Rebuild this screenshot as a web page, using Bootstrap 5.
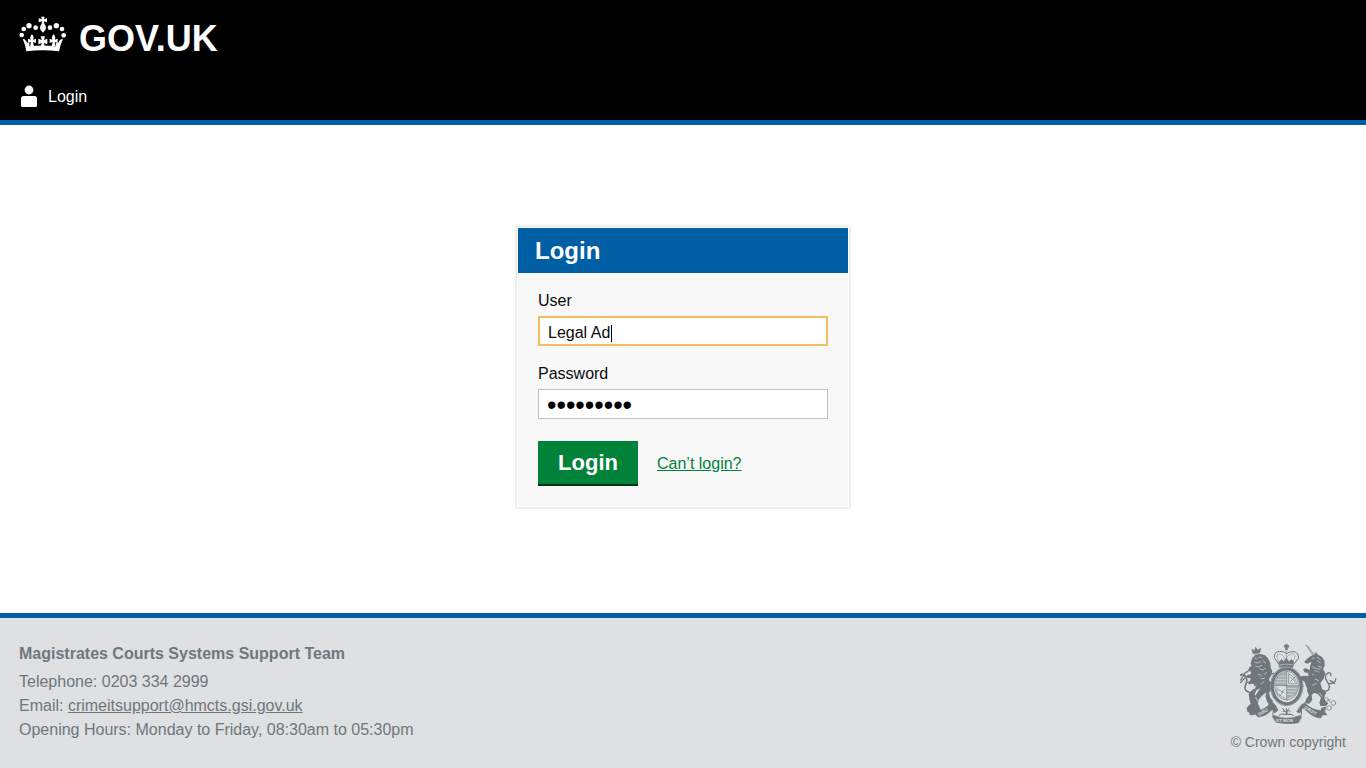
<!DOCTYPE html>
<html lang="en">
<head>
<meta charset="utf-8">
<meta name="viewport" content="width=device-width, initial-scale=1">
<title>Login - GOV.UK</title>
<link href="https://cdn.jsdelivr.net/npm/bootstrap@5.3.0/dist/css/bootstrap.min.css" rel="stylesheet">
<style>
  body { font-family: "Liberation Sans", Arial, sans-serif; font-size: 16px; line-height: 24px; color: #0b0c0c; }
  .site-header { background: #000; border-bottom: 5px solid #005ea5; padding: 16px 20px 11px 19px; }
  .brand-name { font-size: 36px; line-height: 46px; }
  .site-header a { color: #fff; }
  .site-nav { padding-top: 23px; }
  .panel { width: 332px; background: #f8f8f8; border: 1px solid #fff; box-shadow: 0 0 3px 1px #dcdfdf; }
  .panel-title { background: #005ea5; color: #fff; font-size: 24px; line-height: 45px; padding: 0 17px; }
  .panel-content { padding: 16px 20px 20px; }
  .form-label { margin-bottom: 3px; display: block; }
  .form-control { height: 30px; padding: 3px 8px 0 9px; border: 1px solid #bfc1c3; border-radius: 0; font-size: 16px; line-height: 24px; color: #0b0c0c; }
  .form-control[type=password] { font-size: 27px; padding-left: 8px; color: #000; }
  .field-active, .field-active:focus { border: 2px solid #f5be5c; padding: 3px 8px 0; box-shadow: none; caret-color: transparent; color: #0b0c0c; }
  .text-caret { position: absolute; left: 73px; top: 9px; width: 1px; height: 17px; background: #000; }
  .panel-actions { gap: 19px; padding-top: 22px; }
  .btn-go { width: 100px; height: 45px; padding: 0; border: 0; border-bottom: 2px solid #003618; border-radius: 0; background: #00823b; color: #fff; font-size: 22px; line-height: 43px; font-weight: 700; }
  .btn-go:hover { background: #00692f; color: #fff; }
  .help-link { color: #00823b; }
  .site-footer { background: #dee0e2; border-top: 5px solid #005ea5; color: #6f777b; padding: 24px 20px 16px 19px; }
  .site-footer a { color: #6f777b; }
  .copyright { font-size: 14px; line-height: 20px; }
</style>
</head>
<body class="min-vh-100 d-flex flex-column">

<header class="site-header">
  <a href="#" class="d-inline-flex align-items-start align-top text-decoration-none" aria-label="GOV.UK">
    <svg width="48" height="36" viewBox="27 18 144 108" fill="#fff" aria-hidden="true">
      <path d="M93 20h11l-2 8 9-3v12l-9-3 1 7q5 6 5 13t-9 14q-9-7-9-14t5-13l1-7-10 3V25l10 3z"/>
      <circle cx="77" cy="53" r="7"/><circle cx="57" cy="47" r="8"/><circle cx="41" cy="57" r="7"/><circle cx="35" cy="75" r="7"/>
      <circle cx="120" cy="53" r="7"/><circle cx="139" cy="47" r="8"/><circle cx="156" cy="57" r="7"/><circle cx="161" cy="76" r="7"/>
      <path d="M38 86q8 1 10 6 2 9 10 7v10q40-5 80 0V99q8 2 10-7 3-5 11-6-8 18-12 38-49-7-98 0-3-20-11-38z"/>
      <path d="M92 79h13l-3 11 10-4v17l-10-4 2 9H93l2-9-10 4V86l10 4z"/>
      <path d="M66 73q8 8 3 16l9-3v13l-9-3 3 12H60l3-12-9 3V86l8 3q-4-8 4-16zM131 73q8 8 3 16l9-3v13l-9-3 3 12h-12l3-12-9 3V86l8 3q-4-8 4-16z"/>
    </svg>
    <span class="brand-name fw-bold ms-2 ps-1">GOV.UK</span>
  </a>
  <nav class="site-nav d-flex">
    <a href="#" class="d-flex align-items-center text-decoration-none">
      <svg class="me-2" width="21" height="24" viewBox="0 0 21 24" fill="#fff" aria-hidden="true"><circle cx="10" cy="5" r="4.400"/><path d="M4.500 11h11Q18 11 18 13.500V20.500Q18 22 16.500 22H3.500Q2 22 2 20.500V13.500Q2 11 4.500 11z"/></svg>
      <span>Login</span>
    </a>
  </nav>
</header>

<main class="flex-grow-1 d-flex align-items-center justify-content-center pb-1">
  <form class="panel" onsubmit="return false">
    <h1 class="panel-title fw-bold m-0">Login</h1>
    <div class="panel-content">
      <div class="mb-3">
        <label class="form-label" for="user">User</label>
        <div class="position-relative">
          <input class="form-control field-active" id="user" type="text" value="Legal Ad">
          <span class="text-caret" aria-hidden="true"></span>
        </div>
      </div>
      <div>
        <label class="form-label" for="password">Password</label>
        <input class="form-control" id="password" type="password" value="magistrat">
      </div>
      <div class="panel-actions d-flex align-items-center">
        <button class="btn btn-go" type="submit">Login</button>
        <a class="help-link" href="#">Can’t login?</a>
      </div>
    </div>
  </form>
</main>

<footer class="site-footer d-flex justify-content-between align-items-start">
  <div>
    <h2 class="fs-6 fw-bold mb-1 lh-base">Magistrates Courts Systems Support Team</h2>
    <div>Telephone: 0203 334 2999</div>
    <div>Email: <a href="mailto:crimeitsupport@hmcts.gsi.gov.uk">crimeitsupport@hmcts.gsi.gov.uk</a></div>
    <div>Opening Hours: Monday to Friday, 08:30am to 05:30pm</div>
  </div>
  <div class="d-flex flex-column align-items-center">
    <svg class="mb-2" width="98" height="82" viewBox="84 110 294 246" fill="none" stroke="#6f777b" stroke-width="3" stroke-linecap="round" stroke-linejoin="round" aria-hidden="true">
      <!-- lion -->
      <path fill="#6f777b" stroke="none" d="M124 158l9-10 15-2 14 4 9 9 7 14 1 14 5 10-4 14-6 10 4 18-5 14-13-12-13 8-11 6-5 12 8 12-2 12 8 12 4 12-10 6-14-8-6 10-10-4-2-12 12-12-4-14-2-16 10-10 10-8-6-12-12 2-8-6 10-4 2-8-8-2-4-8 12-2 2-10-8-4 2-8 6-2-2-10z"/>
      <path fill="#6f777b" stroke="none" d="M150 244l22-9 8 16-6 12 4 14 8 10-5 10-12-6-6-18 4-12-12 8-12 14-4 20-12 6-8-14 10-16z"/>
      <path fill="#6f777b" stroke-width="2" d="M126 145l-3-13 8 5 3-11 6 9 9-6-3 13z"/>
      <path stroke="#dee0e2" stroke-width="2" d="M131 158l7 3m6-6l9 2m-22 13l8 3 9-4m-14 13l8 3 10-5m4-14l8 7m-18 17l8 4 9-5m-21 17l9 4m8-2l8-6m-17 18l10-1m-25 21l-4 10m19-14l9-7m-25 47l6 12"/>
      <path stroke-width="5" d="M118 262q-16-4-16-14c0-13 10-19 4-31-5-9-13-13-17-7"/>
      <path stroke-width="4" d="M89 224l14-22 8-4m-10 20l-12 14m78-5l22 8m-24-25l23-6m-60 12l-24-2m26-12l-18-8"/>
      <!-- unicorn -->
      <path stroke-width="2" d="M284 118l20 29M289 121l19 25"/>
      <path fill="#6f777b" stroke="none" d="M301 151l10-5 3-6 7 8 12 7 7 11 1 15-5 10 7 13-5 16-10 13 5 17 13 12-7 12 4 14 9 5-6 8-17 2-4-11 5-15-10-11-13-4-10-11-11-6-5-15-10-6-5-9 12-4 15 1-2-9-11-2-4-9 8-3 12 5 2-14 4-10-14 5-9-5 12-12z"/>
      <path fill="#6f777b" stroke="none" d="M290 234l22 8 2 14-12 14 2 14-10 12-12-4 4-12 8-10-6-14z"/>
      <path stroke="#dee0e2" stroke-width="2" d="M304 158l5 1m10-3l9 7m-9 3l9 7m-6 9l10 4m-28-2l10 6 14 1m-17 5l14 5m-21 6l12 6m-4 8l11 5m-7 9l-11 4m20 23l8 11"/>
      <path stroke-width="4" d="M336 256c20 6 22-12 17-20-7-12-16-22-5-31 7-6 14-1 11 6m-4 24q19-1 19-14m-16 5l13 8m-39-12l-22-12"/>
      <path stroke-width="2" d="M306 247l21 14 18 17m-3 10l16-5m-9-6l8 14m-15-84l-29-8"/>
      <circle cx="367" cy="293" r="7" stroke-width="2"/><circle cx="354" cy="308" r="7" stroke-width="2"/>
      <!-- royal crown -->
      <path fill="#6f777b" stroke-width="2" d="M224 117h5l-1 5 5-2v6l-5-1 2 8h-7l2-8-5 1v-6l5 2z"/>
      <path stroke-width="3" d="M203 176l-13-19q-1-18 16-19 15 0 20 7 7-7 24-6 14 4 12 20l-13 17"/>
      <path stroke-width="2" stroke-dasharray="2 4" d="M203 166q-11-21 3-20 12 2 18 20 5-20 22-20 11 3 1 20M226 137v33"/>
      <path fill="#6f777b" stroke-width="2" d="M204 170l8-8 6 7 8-10 8 10 7-7 7 8-2 16q-22-5-40 0z"/>
      <path stroke="#dee0e2" stroke-width="2" stroke-dasharray="4 3" d="M208 179q18-5 37 0"/>
      <!-- garter and shield -->
      <ellipse cx="227" cy="243" rx="49" ry="58" stroke-width="2"/>
      <ellipse cx="227" cy="243" rx="43" ry="52" stroke-width="9" stroke-dasharray="8 3"/>
      <ellipse cx="227" cy="241" rx="36" ry="43" stroke-width="2" fill="#dee0e2"/>
      <path d="M227 200v83M191 241h72" stroke-width="2"/>
      <path fill="#6f777b" fill-opacity=".5" stroke="none" d="M200 213q11-12 27-13v41h-34q0-17 7-28zM227 241h34q0 20-12 31l-22 10z"/>
      <path stroke="#dee0e2" stroke-width="2" d="M202 213h23m-28 9h28m-30 9h30m4 18h27m-27 9h24m-24 9h18"/>
      <path stroke-width="2" d="M233 206v29h24q-4-22-24-29zm5 9l14 14m0-14l-14 14m-40 18v18l24 14m-20-26l17 9m0-9l-11 17"/>
      <!-- plants and motto scroll -->
      <path fill="#6f777b" stroke-width="2" d="M174 281l18 17 9 17-10 8-18-26zM270 300l12-8-15 31-9-3z"/>
      <path fill="#6f777b" stroke-width="2" d="M135 318q24-3 42-23l10 12q-16 25-46 28l-7-8-16 2-4-11 12-5q10-1 9 5z"/>
      <path fill="#6f777b" stroke-width="2" d="M271 309l12-15q20 21 47 22l2-8 12-3-3 15 7 8-14 1-5 9q-26-1-50-29z"/>
      <path fill="#6f777b" stroke-width="2" d="M191 331q34 16 74 0l7 3-10 18q-33 7-67-1l-11-18z"/>
      <path stroke-width="3" d="M188 313q-8 20 6 22m75-26q9 21-5 25m-38-24v18m-10-10q11-5 10 7m11-8q-11-4-9 9m-15-1l-9 5m31-4l12 4"/>
      <path stroke-width="3" d="M215 309l6 9m12-8l-7 9m-11 8h22"/>
      <g fill="#dee0e2" stroke="none" font-size="13" font-weight="700">
        <text transform="translate(145 332) rotate(-30)">DIEU</text>
        <text x="196" y="351">ET MON</text>
        <text transform="translate(279 309) rotate(31)">DROIT</text>
      </g>
    </svg>
    <div class="copyright">© Crown copyright</div>
  </div>
</footer>

<script src="https://cdn.jsdelivr.net/npm/bootstrap@5.3.0/dist/js/bootstrap.bundle.min.js"></script>
</body>
</html>
